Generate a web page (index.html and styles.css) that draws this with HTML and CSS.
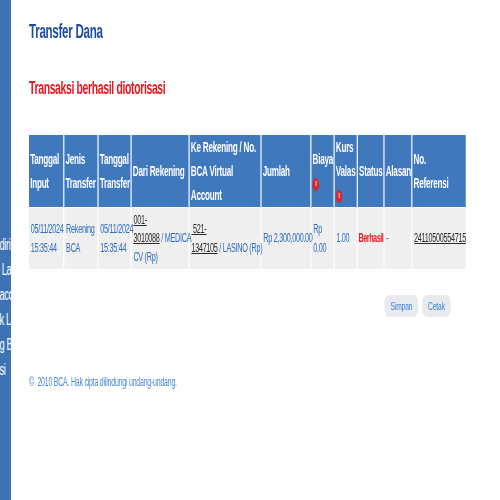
FILE: index.html
```html
<!DOCTYPE html>
<html lang="id">
<head>
    <meta charset="UTF-8">
    <meta name="viewport" content="width=device-width, initial-scale=1.0">
    <title>Transfer Dana</title>
    <link rel="stylesheet" href="styles.css">
</head>
<body>

<div class="page">
    <!-- Menu samping (terpotong) -->
    <div class="side">
        <div class="side-menu">
            <span>diri</span>
            <span>&nbsp;Lain</span>
            <span>accou</span>
            <span>k Lain</span>
            <span>g BCA</span>
            <span>si</span>
        </div>
    </div>

    <div class="content">
        <h1 class="title">Transfer Dana</h1>
        <h2 class="notice">Transaksi berhasil diotorisasi</h2>

        <table class="trx">
            <colgroup>
                <col class="c-input">
                <col class="c-jenis">
                <col class="c-tgl">
                <col class="c-dari">
                <col class="c-ke">
                <col class="c-jumlah">
                <col class="c-biaya">
                <col class="c-kurs">
                <col class="c-status">
                <col class="c-alasan">
                <col class="c-ref">
            </colgroup>
            <thead>
                <tr>
                    <th>Tanggal<br>Input</th>
                    <th>Jenis<br>Transfer</th>
                    <th>Tanggal<br>Transfer</th>
                    <th>Dari Rekening</th>
                    <th>Ke Rekening / No.<br>BCA Virtual<br>Account</th>
                    <th>Jumlah</th>
                    <th>Biaya<br><span class="info"></span></th>
                    <th>Kurs<br>Valas<br><span class="info"></span></th>
                    <th>Status</th>
                    <th>Alasan</th>
                    <th>No.<br>Referensi</th>
                </tr>
            </thead>
            <tbody>
                <tr>
                    <td>05/11/2024<br>15:35:44</td>
                    <td>Rekening<br>BCA</td>
                    <td>05/11/2024<br>15:35:44</td>
                    <td><a href="#">001-<br>3010088</a> / MEDICA<br>CV (Rp)</td>
                    <td><a href="#">&nbsp;521-<br>1347105</a> / LASINO (Rp)</td>
                    <td>Rp 2,300,000.00</td>
                    <td>Rp<br>0.00</td>
                    <td>1.00</td>
                    <td class="ok">Berhasil</td>
                    <td>-</td>
                    <td><a href="#">24110500554715</a></td>
                </tr>
            </tbody>
        </table>

        <div class="actions">
            <button class="btn">Simpan</button>
            <button class="btn">Cetak</button>
        </div>

        <p class="footer">&copy;&nbsp; 2010 BCA. Hak cipta dilindungi undang-undang.</p>
    </div>
</div>

</body>
</html>
```

FILE: styles.css
```css
* {
    margin: 0;
    padding: 0;
    box-sizing: border-box;
}
html, body {
    overflow: hidden;
}
body {
    font-family: 'Liberation Sans', Arial, sans-serif;
    background-color: #fff;
}
/* halaman aslinya tampil menyempit ke samping */
.page {
    display: flex;
    width: 862px;
    height: 100vh;
    transform: scaleX(0.58);
    transform-origin: 0 0;
}
.side {
    width: 19px;
    flex-shrink: 0;
    background-color: #3d73b6;
    overflow: hidden;
    color: #fff;
    font-size: 16px;
    letter-spacing: -0.6px;
    line-height: 25px;
}
.side-menu {
    display: flex;
    flex-direction: column;
    padding-top: 232px;
    margin-left: -1px;
    white-space: nowrap;
}
.content {
    flex: 1;
    padding: 20px 0 0 31px;
}
.title {
    font-size: 20px;
    letter-spacing: -0.5px;
    line-height: 23px;
    font-weight: bold;
    color: #1c4f9d;
}
.notice {
    margin-top: 35px;
    font-size: 18px;
    letter-spacing: -0.6px;
    line-height: 21px;
    font-weight: bold;
    color: #e8161e;
}
.trx {
    margin-top: 36px;
    width: 753px;
    table-layout: fixed;
    border-collapse: collapse;
}
.c-input { width: 60px; }
.c-jenis { width: 59px; }
.c-tgl { width: 57px; }
.c-dari { width: 100px; }
.c-ke { width: 124px; }
.c-jumlah { width: 86px; }
.c-biaya { width: 40px; }
.c-kurs { width: 40px; }
.c-status { width: 46px; }
.c-alasan { width: 48px; }
.c-ref { width: 93px; }
.trx th {
    background-color: #3f78bd;
    color: #fff;
    font-size: 14px;
    letter-spacing: -0.4px;
    font-weight: bold;
    line-height: 24px;
    text-align: left;
    vertical-align: middle;
    padding: 0 0 0 2px;
    white-space: nowrap;
    border-left: 2px solid #fff;
}
.trx td {
    background-color: #efefef;
    color: #2f6dbb;
    font-size: 12.5px;
    letter-spacing: -0.5px;
    line-height: 18.5px;
    vertical-align: middle;
    padding: 2.75px 0 2.75px 3px;
    white-space: nowrap;
    border-left: 2px solid #fff;
    border-top: 1px solid #fff;
}
.trx th:first-child, .trx td:first-child {
    border-left: none;
}
.trx a {
    color: #2a2a2a;
    text-decoration: underline;
}
.trx .ok {
    color: #e31e24;
    font-weight: bold;
    letter-spacing: -0.8px;
    padding-left: 1px;
}
.info {
    display: inline-block;
    width: 11px;
    height: 13px;
    border-radius: 50%;
    background-color: #d8262d;
    vertical-align: middle;
    position: relative;
}
.info::after {
    content: '';
    position: absolute;
    left: 4.5px;
    top: 3px;
    width: 2px;
    height: 5px;
    background-color: #f3b6b8;
}
.actions {
    display: flex;
    justify-content: flex-end;
    gap: 7px;
    margin-top: 26px;
    width: 753px;
    padding-right: 26px;
}
.btn {
    font-family: 'Liberation Sans', Arial, sans-serif;
    font-size: 11.5px;
    letter-spacing: -0.2px;
    line-height: 14px;
    padding: 4px 10px;
    border: none;
    border-radius: 8px;
    background-color: #e8eaee;
    color: #3b80d4;
    cursor: pointer;
}
.footer {
    margin-top: 57px;
    font-size: 12px;
    letter-spacing: -0.35px;
    line-height: 16px;
    color: #4a88d0;
}
```
